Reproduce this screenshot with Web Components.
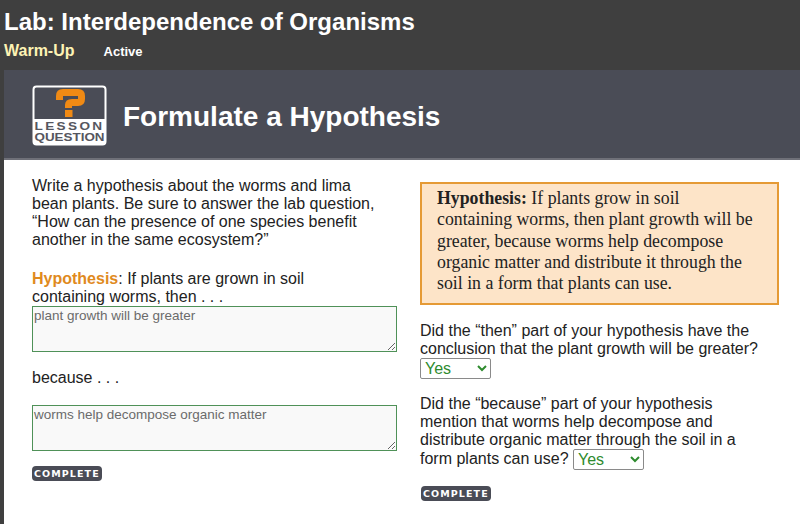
<!DOCTYPE html>
<html lang="en">
<head>
<meta charset="utf-8">
<title>Lab: Interdependence of Organisms</title>
<style>
    html, body{
        margin: 0;
        height: 100%;
        background: #fff;
        font-family: "Liberation Sans", Arial, sans-serif;
    }
    body{
        width: 800px;
        height: 524px;
        overflow: hidden;
    }
</style>
</head>
<body>
<lab-page>
    <lab-header slot="header" title="Lab: Interdependence of Organisms" section="Warm-Up" status="Active"></lab-header>
    <lesson-banner slot="banner" heading="Formulate a Hypothesis"></lesson-banner>

    <left-col slot="left">
        <question-text style="height:93px;width:350px">Write a hypothesis about the worms and lima bean plants. Be sure to answer the lab question, “How can the presence of one species benefit another in the same ecosystem?”</question-text>
        <question-text><b style="color:#e08a1e">Hypothesis</b>: If plants are grown in soil<br>containing worms, then . . .</question-text>
        <answer-box value="plant growth will be greater"></answer-box>
        <question-text style="margin:17px 0 18px">because . . .</question-text>
        <answer-box value="worms help decompose organic matter"></answer-box>
        <complete-button style="margin-top:15px"></complete-button>
    </left-col>

    <right-col slot="right">
        <hypothesis-note><b>Hypothesis:</b> If plants grow in soil containing worms, then plant growth will be greater, because worms help decompose organic matter and distribute it through the soil in a form that plants can use.</hypothesis-note>
        <question-text style="margin-top:17px;width:345px">Did the “then” part of your hypothesis have the conclusion that the plant growth will be greater?<br><yes-select></yes-select></question-text>
        <question-text style="margin-top:16px;width:345px">Did the “because” part of your hypothesis mention that worms help decompose and distribute organic matter through the soil in a form plants can use? <yes-select></yes-select></question-text>
        <complete-button style="margin-top:16px;margin-left:1px"></complete-button>
    </right-col>
</lab-page>

<script>
class LabPage extends HTMLElement{
    constructor(){
        super();
        this.attachShadow({ mode: 'open' });
    }

    connectedCallback(){
        this.shadowRoot.innerHTML = `
            <slot name="header"></slot>
            <div class="frame">
                <slot name="banner"></slot>
                <div class="cols">
                    <slot name="left"></slot>
                    <slot name="right"></slot>
                </div>
            </div>
            <style>
                :host{
                    display: block;
                    background: #3f3f3f;
                    height: 524px;
                }
                .frame{
                    margin-left: 4px;
                    height: 454px;
                    background: #fff;
                }
                .cols{
                    display: grid;
                    grid-template-columns: 388px 1fr;
                    padding-left: 28px;
                }
            </style>
        `;
    }
}

class LabHeader extends HTMLElement{
    constructor(){
        super();
        this.attachShadow({ mode: 'open' });
    }

    connectedCallback(){
        this.shadowRoot.innerHTML = `
            <h1>${this.getAttribute("title")}</h1>
            <div class="sub">
                <span class="section">${this.getAttribute("section")}</span>
                <span class="status">${this.getAttribute("status")}</span>
            </div>
            <style>
                :host{
                    display: block;
                    height: 70px;
                    box-sizing: border-box;
                    padding: 8px 0 0 4px;
                    background: #3f3f3f;
                    font-family: "Liberation Sans", Arial, sans-serif;
                }
                h1{
                    margin: 0;
                    font-size: 24px;
                    line-height: 28px;
                    font-weight: 700;
                    color: #fff;
                }
                .sub{
                    display: flex;
                    align-items: baseline;
                    gap: 29px;
                    margin-top: 6px;
                    font-weight: 700;
                }
                .section{
                    font-size: 16px;
                    color: #fdf3b4;
                }
                .status{
                    font-size: 13px;
                    color: #fff;
                }
            </style>
        `;
    }
}

class LessonBanner extends HTMLElement{
    constructor(){
        super();
        this.attachShadow({ mode: 'open' });
    }

    connectedCallback(){
        this.shadowRoot.innerHTML = `
            <svg width="75" height="61" viewBox="0 0 75 61">
                <rect x="1.5" y="1.5" width="72" height="58" rx="3" fill="#4a4c56" stroke="#fff" stroke-width="2"/>
                <path d="M1 34h73v22a3 3 0 0 1-3 3H4a3 3 0 0 1-3-3z" fill="#fff"/>
                <path d="M27.5 15V11q0-3.5 3.5-3.5h15q3.5 0 3.5 3.5v3q0 3.5-3.5 3.5h-6q-3.5 0-3.5 2.5v3" fill="none" stroke="#f08a14" stroke-width="7"/>
                <rect x="33" y="25" width="7.5" height="7" fill="#f08a14"/>
                <text x="2.5" y="44.5" font-family="Liberation Sans, Arial, sans-serif" font-weight="700" font-size="11.5" fill="#55565e" letter-spacing="2" textLength="70" lengthAdjust="spacingAndGlyphs">LESSON</text>
                <text x="2.5" y="55.5" font-family="Liberation Sans, Arial, sans-serif" font-weight="700" font-size="11.5" fill="#55565e" textLength="70" lengthAdjust="spacingAndGlyphs">QUESTION</text>
            </svg>
            <h2>${this.getAttribute("heading")}</h2>
            <style>
                :host{
                    display: flex;
                    align-items: center;
                    gap: 16px;
                    height: 90px;
                    box-sizing: border-box;
                    padding-left: 28px;
                    padding-top: 2px;
                    background: #4a4c56;
                    border-bottom: 2px solid #6f7078;
                    font-family: "Liberation Sans", Arial, sans-serif;
                }
                svg{
                    flex: none;
                    display: block;
                }
                h2{
                    margin: 3px 0 0;
                    font-size: 28px;
                    font-weight: 700;
                    color: #fff;
                    white-space: nowrap;
                }
            </style>
        `;
    }
}

class LeftCol extends HTMLElement{
    constructor(){
        super();
        this.attachShadow({ mode: 'open' });
    }

    connectedCallback(){
        this.shadowRoot.innerHTML = `
            <slot></slot>
            <style>
                :host{
                    display: block;
                    width: 365px;
                    padding-top: 17px;
                }
            </style>
        `;
    }
}

class RightCol extends HTMLElement{
    constructor(){
        super();
        this.attachShadow({ mode: 'open' });
    }

    connectedCallback(){
        this.shadowRoot.innerHTML = `
            <slot></slot>
            <style>
                :host{
                    display: block;
                    width: 359px;
                    padding-top: 22px;
                }
            </style>
        `;
    }
}

class QuestionText extends HTMLElement{
    constructor(){
        super();
        this.attachShadow({ mode: 'open' });
    }

    connectedCallback(){
        this.shadowRoot.innerHTML = `
            <slot></slot>
            <style>
                :host{
                    display: block;
                    font-family: "Liberation Sans", Arial, sans-serif;
                    font-size: 16px;
                    line-height: 18px;
                    color: #222;
                }
            </style>
        `;
    }
}

class AnswerBox extends HTMLElement{
    constructor(){
        super();
        this.attachShadow({ mode: 'open' });
    }

    connectedCallback(){
        this.shadowRoot.innerHTML = `
            <textarea spellcheck="false">${this.getAttribute("value")}</textarea>
            <style>
                :host{
                    display: block;
                }
                textarea{
                    display: block;
                    width: 365px;
                    height: 46px;
                    box-sizing: border-box;
                    margin: 0;
                    padding: 1px;
                    border: 1px solid #4f9158;
                    border-radius: 0;
                    outline: none;
                    background: #f9f9f9;
                    color: #6b6b6b;
                    font-family: "Liberation Sans", Arial, sans-serif;
                    font-size: 13.5px;
                    line-height: 15px;
                }
            </style>
        `;
    }
}

class CompleteButton extends HTMLElement{
    constructor(){
        super();
        this.attachShadow({ mode: 'open' });
    }

    connectedCallback(){
        this.shadowRoot.innerHTML = `
            <button type="button">COMPLETE</button>
            <style>
                :host{
                    display: block;
                }
                button{
                    display: block;
                    height: 15px;
                    padding: 0 2px;
                    border: 0;
                    border-radius: 4px;
                    background: #4a4c56;
                    color: #fff;
                    font-family: "DejaVu Sans", Verdana, sans-serif;
                    font-size: 9.5px;
                    line-height: 15px;
                    font-weight: 700;
                    letter-spacing: 1.1px;
                }
            </style>
        `;
    }
}

class HypothesisNote extends HTMLElement{
    constructor(){
        super();
        this.attachShadow({ mode: 'open' });
    }

    connectedCallback(){
        this.shadowRoot.innerHTML = `
            <slot></slot>
            <style>
                :host{
                    display: block;
                    box-sizing: border-box;
                    height: 123px;
                    padding: 4px 20px 0 15px;
                    background: #fde4c8;
                    border: 2px solid #e59a35;
                    font-family: "Liberation Serif", "Times New Roman", serif;
                    font-size: 17.8px;
                    line-height: 21.3px;
                    color: #222;
                }
            </style>
        `;
    }
}

class YesSelect extends HTMLElement{
    constructor(){
        super();
        this.attachShadow({ mode: 'open' });
    }

    connectedCallback(){
        this.shadowRoot.innerHTML = `
            <select>
                <option selected>Yes</option>
                <option>No</option>
            </select>
            <style>
                :host{
                    display: inline-block;
                    vertical-align: middle;
                }
                select{
                    display: block;
                    width: 71px;
                    height: 21px;
                    margin: 0;
                    padding: 0;
                    border: 1px solid #8a8a8a;
                    border-radius: 2px;
                    background: #fff;
                    color: #2e8b2e;
                    font-family: "Liberation Sans", Arial, sans-serif;
                    font-size: 16px;
                }
            </style>
        `;
    }
}

customElements.define('lab-page', LabPage);
customElements.define('lab-header', LabHeader);
customElements.define('lesson-banner', LessonBanner);
customElements.define('left-col', LeftCol);
customElements.define('right-col', RightCol);
customElements.define('question-text', QuestionText);
customElements.define('answer-box', AnswerBox);
customElements.define('complete-button', CompleteButton);
customElements.define('hypothesis-note', HypothesisNote);
customElements.define('yes-select', YesSelect);
</script>
</body>
</html>
